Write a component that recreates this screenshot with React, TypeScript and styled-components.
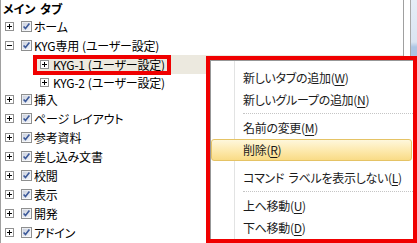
import React from "react";
import styled, { createGlobalStyle } from "styled-components";

const GlobalStyle = createGlobalStyle`
  html, body {
    margin: 0;
    padding: 0;
    background: #fff;
  }
  body {
    font-family: "Noto Sans CJK JP", "Noto Sans", sans-serif;
    font-feature-settings: "palt" 1;
    word-spacing: 2px;
    color: #000;
  }
`;

const Screen = styled.div`
  position: relative;
  width: 417px;
  height: 243px;
  overflow: hidden;
  display: flex;
  background: #fff;
`;

const TreePanel = styled.div`
  width: 402px;
  border-left: 1px solid #a0a0a0;
  border-right: 1px solid #a0a0a0;
  display: flex;
  flex-direction: column;
`;

const Gap = styled.div`
  width: 6px;
`;

const ScrollStrip = styled.div`
  width: 6px;
  border-left: 1px solid #a8a8a8;
  background: linear-gradient(#e6edf6 0, #dbe5f2 42px, #adc6e4 47px, #adc6e4 100%);
`;

const Header = styled.div`
  height: 17px;
  line-height: 17px;
  padding-left: 2px;
  font-size: 12px;
  font-weight: bold;
`;

const Row = styled.div<{ $level: number; $h?: number; $selected?: boolean }>`
  display: flex;
  align-items: center;
  height: ${(p) => p.$h ?? 19}px;
  padding-left: ${(p) => (p.$level === 0 ? 4 : 39)}px;
  font-size: 12px;
  word-spacing: 0.5px;
  letter-spacing: -0.2px;
  white-space: nowrap;
  background: ${(p) =>
    p.$selected ? "linear-gradient(to right, transparent 36px, #ece9df 36px)" : "transparent"};
`;

const Expander = styled.svg<{ $level: number }>`
  width: 9px;
  height: 9px;
  flex: none;
  margin-right: ${(p) => (p.$level === 0 ? 7 : 4)}px;
`;

const Check = styled.svg`
  width: 11px;
  height: 11px;
  flex: none;
  margin-right: 2px;
`;

const Label = styled.span`
  line-height: 19px;
`;

const Callout = styled.div<{ $left: number; $top: number; $w: number; $h: number }>`
  position: absolute;
  left: ${(p) => p.$left}px;
  top: ${(p) => p.$top}px;
  width: ${(p) => p.$w}px;
  height: ${(p) => p.$h}px;
  box-sizing: border-box;
  border: 4px solid #f00000;
`;

const Menu = styled.div`
  position: relative;
  height: 100%;
  box-sizing: border-box;
  border: 1px solid #979797;
  border-right: none;
  border-bottom: none;
  background: #fff;
  padding-top: 6px;
  display: flex;
  flex-direction: column;
`;

const Gutter = styled.div`
  position: absolute;
  left: 23px;
  top: 0;
  bottom: 0;
  width: 1px;
  background: #e2e3e3;
  box-shadow: 1px 0 0 #fff;
`;

const Item = styled.div<{ $active?: boolean }>`
  position: relative;
  height: 22px;
  line-height: 20px;
  box-sizing: border-box;
  padding-left: 31px;
  margin-right: 1px;
  font-size: 12px;
  letter-spacing: -0.3px;
  color: #1b1b1b;
  white-space: nowrap;
  border: 1px solid ${(p) => (p.$active ? "#e5c365" : "transparent")};
  border-radius: 3px;
  background: ${(p) =>
    p.$active ? "linear-gradient(#fef7dc 0%, #fdeab0 50%, #f9db86 100%)" : "transparent"};

  u {
    text-decoration-thickness: 1px;
    text-underline-offset: 2px;
  }
`;

const Separator = styled.div<{ $hidden?: boolean }>`
  position: relative;
  height: 6px;
  margin-left: 32px;
  &::after {
    content: "";
    position: absolute;
    left: 0;
    right: 0;
    top: 2px;
    border-top: 1px dotted ${(p) => (p.$hidden ? "transparent" : "#c5c5c5")};
  }
`;

const PlusBox = ({ level, open }: { level: number; open?: boolean }) => (
  <Expander $level={level} viewBox="0 0 9 9">
    <rect x="0.5" y="0.5" width="8" height="8" fill="#fff" stroke="#919191" />
    <line x1="2" y1="4.5" x2="7" y2="4.5" stroke="#000" />
    {!open && <line x1="4.5" y1="2" x2="4.5" y2="7" stroke="#000" />}
  </Expander>
);

const CheckBox = () => (
  <Check viewBox="0 0 11 11">
    <defs>
      <linearGradient id="cbg" x1="0" y1="0" x2="1" y2="1">
        <stop offset="0" stopColor="#c9cfdc" />
        <stop offset="1" stopColor="#f4f6fa" />
      </linearGradient>
    </defs>
    <rect x="0.5" y="0.5" width="10" height="10" fill="#fff" stroke="#8e8f8f" />
    <rect x="1.5" y="1.5" width="8" height="8" fill="url(#cbg)" />
    <path d="M2.6 5.4 L4.5 7.6 L8.4 2.6" fill="none" stroke="#3d5a9a" strokeWidth="1.6" />
  </Check>
);

type Node = { label: string; level: number; check?: boolean; open?: boolean; h?: number; selected?: boolean };

const nodes: Node[] = [
  { label: "ホーム", level: 0, check: true },
  { label: "KYG専用 (ユーザー設定)", level: 0, check: true, open: true },
  { label: "KYG-1 (ユーザー設定)", level: 1, selected: true },
  { label: "KYG-2 (ユーザー設定)", level: 1, h: 16 },
  { label: "挿入", level: 0, check: true },
  { label: "ページ レイアウト", level: 0, check: true },
  { label: "参考資料", level: 0, check: true },
  { label: "差し込み文書", level: 0, check: true },
  { label: "校閲", level: 0, check: true },
  { label: "表示", level: 0, check: true },
  { label: "開発", level: 0, check: true },
  { label: "アドイン", level: 0, check: true },
];

const App = () => (
  <Screen>
    <GlobalStyle />
    <TreePanel>
      <Header>メイン タブ</Header>
      {nodes.map((n) => (
        <Row key={n.label} $level={n.level} $h={n.h} $selected={n.selected}>
          <PlusBox level={n.level} open={n.open} />
          {n.check && <CheckBox />}
          <Label>{n.label}</Label>
        </Row>
      ))}
    </TreePanel>
    <Gap />
    <ScrollStrip />

    <Callout $left={33} $top={55} $w={138} $h={20} />

    <Callout $left={206} $top={56} $w={211} $h={187}>
      <Menu>
        <Gutter />
        <Item>
          新しいタブの追加(<u>W</u>)
        </Item>
        <Item>
          新しいグループの追加(<u>N</u>)
        </Item>
        <Separator />
        <Item>
          名前の変更(<u>M</u>)
        </Item>
        <Item $active>
          削除(<u>R</u>)
        </Item>
        <Separator $hidden />
        <Item>
          コマンド ラベルを表示しない(<u>L</u>)
        </Item>
        <Separator />
        <Item>
          上へ移動(<u>U</u>)
        </Item>
        <Item>
          下へ移動(<u>D</u>)
        </Item>
      </Menu>
    </Callout>
  </Screen>
);

export default App;
